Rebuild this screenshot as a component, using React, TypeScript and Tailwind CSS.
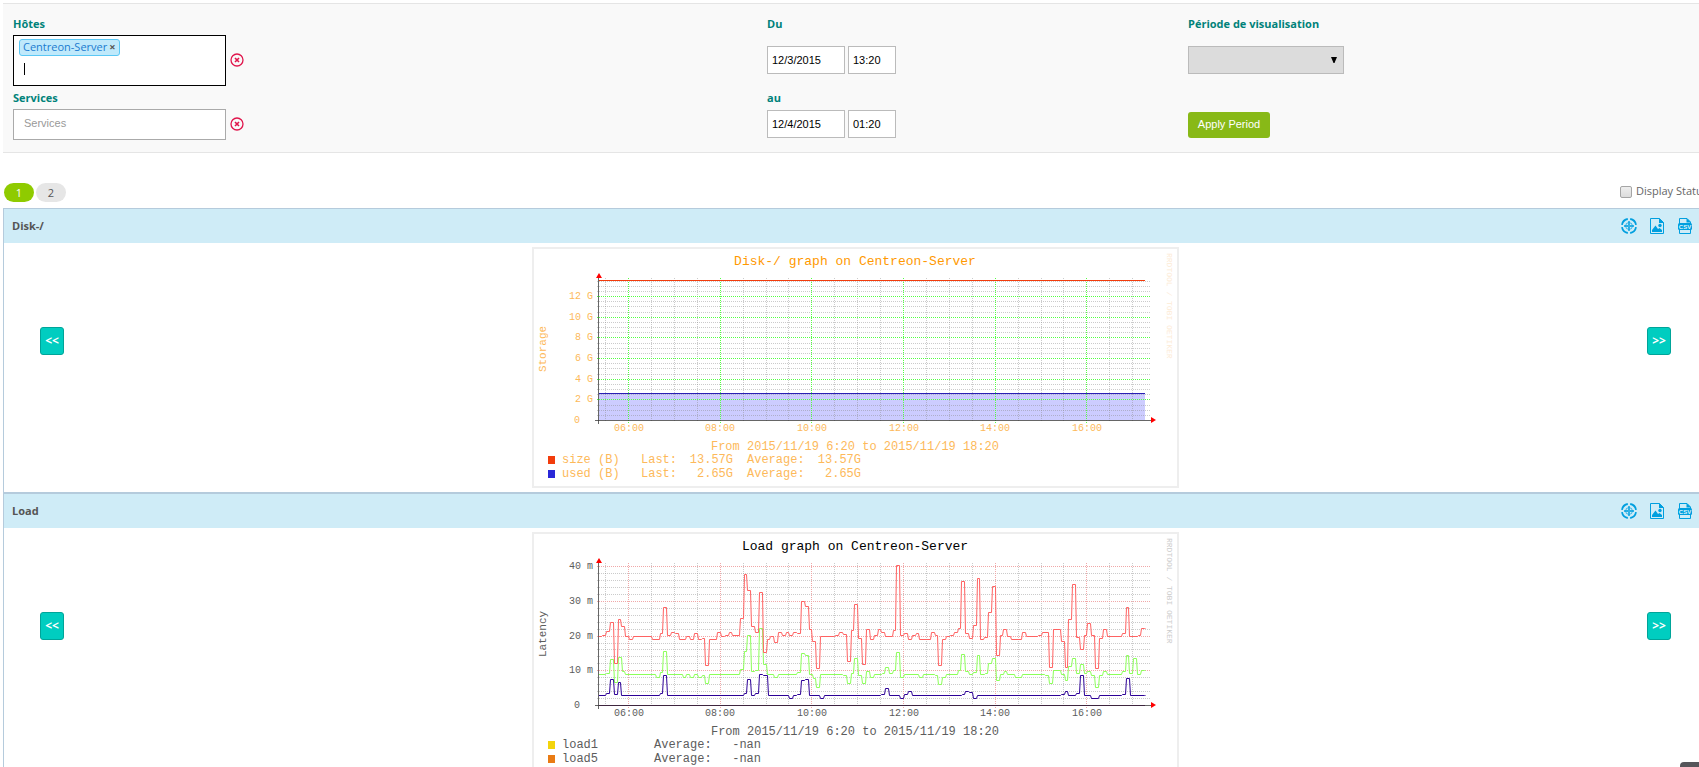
import { useState, type ReactNode } from 'react';

type Step = [number, number];

const RED: Step[] = [[222,334],[231,331],[243,319],[255,292],[267,415],[279,283],[289,304],[301,334],[313,343],[324,334],[382,343],[405,325],[415,247],[426,331],[438,322],[450,325],[462,343],[484,334],[496,343],[508,325],[519,343],[531,340],[541,421],[553,343],[577,322],[588,334],[600,331],[611,322],[622,331],[645,280],[657,148],[666,196],[678,304],[691,322],[703,202],[714,382],[727,343],[734,334],[747,352],[760,322],[771,331],[782,322],[792,331],[805,322],[817,325],[829,229],[840,244],[852,313],[862,349],[874,430],[886,334],[930,331],[943,322],[955,328],[966,409],[978,316],[988,238],[1000,340],[1012,418],[1023,313],[1035,343],[1047,331],[1058,313],[1069,322],[1081,334],[1104,316],[1114,121],[1125,331],[1137,325],[1149,343],[1161,331],[1172,325],[1183,343],[1218,322],[1230,331],[1240,421],[1251,343],[1263,334],[1275,331],[1287,322],[1300,310],[1309,169],[1321,325],[1332,340],[1344,301],[1356,160],[1366,343],[1378,337],[1390,262],[1401,184],[1413,391],[1425,331],[1435,313],[1447,334],[1459,343],[1492,322],[1504,334],[1540,331],[1552,322],[1572,427],[1584,313],[1607,349],[1619,427],[1630,283],[1641,178],[1653,337],[1665,373],[1676,331],[1687,295],[1699,331],[1711,430],[1723,340],[1734,313],[1745,334],[1791,325],[1803,247],[1812,334],[1839,331],[1849,310],[1860,310]];

const GREEN: Step[] = [[222,448],[243,445],[255,403],[268,472],[279,397],[290,439],[301,448],[393,457],[405,442],[415,379],[427,448],[473,457],[484,448],[496,457],[508,448],[519,457],[531,451],[541,475],[553,448],[646,433],[657,378],[666,331],[678,439],[691,436],[703,310],[714,418],[727,448],[748,457],[760,448],[817,442],[828,385],[840,391],[852,448],[863,460],[874,487],[886,448],[955,451],[966,475],[978,445],[988,400],[998,451],[1011,475],[1023,439],[1035,457],[1047,448],[1070,445],[1081,427],[1092,445],[1104,436],[1114,382],[1126,457],[1138,448],[1183,457],[1195,448],[1230,451],[1240,478],[1252,457],[1264,448],[1299,436],[1309,388],[1321,439],[1332,448],[1344,442],[1356,391],[1366,448],[1379,445],[1390,415],[1402,400],[1414,466],[1425,448],[1436,439],[1447,448],[1470,457],[1492,448],[1560,451],[1572,475],[1584,436],[1607,448],[1619,466],[1630,424],[1641,400],[1653,445],[1665,418],[1676,445],[1687,439],[1699,451],[1711,487],[1723,451],[1734,439],[1745,448],[1791,439],[1803,391],[1813,445],[1825,400],[1837,448],[1849,436],[1860,436]];

const INDIGO: Step[] = [[222,511],[243,505],[255,463],[268,508],[279,472],[289,511],[405,505],[415,451],[427,511],[657,505],[667,463],[678,511],[691,505],[702,448],[714,451],[728,511],[793,520],[805,511],[817,508],[829,466],[840,463],[853,511],[885,520],[898,511],[1069,508],[1080,490],[1092,511],[1126,520],[1138,508],[1149,499],[1161,511],[1310,508],[1321,499],[1333,502],[1344,520],[1356,511],[1608,508],[1619,499],[1629,511],[1653,505],[1665,451],[1676,511],[1699,520],[1722,511],[1791,508],[1803,460],[1815,511],[1860,511]];

// Samples are stored on a grid three times finer than the plot.
const stepPath = (steps: Step[]) =>
  steps
    .map(([x, y], i) => {
      const px = Math.round(x / 3 - 7);
      const py = Math.floor(y / 3 - 7) + 0.5;
      return i === 0 ? `M${px} ${py}` : `L${px - 0.5} ${Math.floor(steps[i - 1][1] / 3 - 7) + 0.5}L${px + 0.5} ${py}`;
    })
    .join('');

const HOURS = ['06:00', '08:00', '10:00', '12:00', '14:00', '16:00'];
const MONO = "font-['Liberation_Mono',monospace]";

interface ChartProps {
  title: string;
  titleColor: string;
  textColor: string;
  creditColor: string;
  majorColor: string;
  unitLabel: string;
  yLabels: string[];
  majorStep: number;
  minorStep: number;
  minorCount: number;
  area?: ReactNode;
  lines: ReactNode;
  legend: ReactNode;
}

function Chart(p: ChartProps) {
  const verticals = Array.from({ length: 24 }, (_, i) => ({
    x: Math.floor(96.5 + (i - 1) * 22.92) + 0.5,
    major: (i - 1) % 4 === 0,
  }));
  return (
    <div className="border-2 border-[#eeeeee] bg-white">
      <svg width="643" height="237" viewBox="2 2 643 237" role="img" aria-label={p.title} className={`block ${MONO}`}>
        <text x="323" y="18" textAnchor="middle" fill={p.titleColor} className="text-[13px]">{p.title}</text>
        {p.area}
        <g shapeRendering="crispEdges" strokeWidth="1" strokeDasharray="1 1">
          {Array.from({ length: p.minorCount }, (_, i) => {
            const y = Math.floor(173.5 - (i + 1) * p.minorStep) + 0.5;
            return <line key={i} x1="65" x2="619" y1={y} y2={y} stroke="#8c8c8c" strokeOpacity="0.45" />;
          })}
          {verticals.filter((v) => !v.major && v.x < 619).map((v) => (
            <line key={v.x} x1={v.x} x2={v.x} y1="31" y2="175" stroke="#8c8c8c" strokeOpacity="0.45" />
          ))}
          {p.yLabels.slice(1).map((l, i) => {
            const y = Math.floor(173.5 - (i + 1) * p.majorStep) + 0.5;
            return <line key={l} x1="65" x2="619" y1={y} y2={y} stroke={p.majorColor} />;
          })}
          {verticals.filter((v) => v.major && v.x < 619).map((v) => (
            <line key={v.x} x1={v.x} x2={v.x} y1="31" y2="177" stroke={p.majorColor} />
          ))}
        </g>
        {p.lines}
        <g shapeRendering="crispEdges" stroke="#333333" strokeOpacity="0.75">
          <line x1="63" x2="619" y1="173.5" y2="173.5" />
          <line x1="66.5" x2="66.5" y1="31" y2="177" />
        </g>
        <path d="M67 26L70 31H64Z" fill="#ff0000" />
        <path d="M624 173L619 170V176Z" fill="#ff0000" />
        <g fill={p.textColor} className="text-[10px]">
          {p.yLabels.map((l, i) => (
            <text key={l} x={i === 0 ? 48 : 61} y={Math.floor(176.5 - i * p.majorStep)} textAnchor="end">{l}</text>
          ))}
          {HOURS.map((h, i) => (
            <text key={h} x={Math.floor(97 + i * 91.67)} y="184" textAnchor="middle">{h}</text>
          ))}
        </g>
        <text transform="translate(14 102) rotate(-90)" textAnchor="middle" fill={p.textColor} className="text-[11px]">{p.unitLabel}</text>
        <text transform="translate(635 6) rotate(90)" fill={p.creditColor} className="text-[8px]">RRDTOOL / TOBI OETIKER</text>
        <g fill={p.textColor} className="text-[12px]">
          <text x="323" y="203" textAnchor="middle">From 2015/11/19 6:20 to 2015/11/19 18:20</text>
          {p.legend}
        </g>
      </svg>
    </div>
  );
}

function DiskChart() {
  const rows = [
    { name: 'size', color: '#f23c0c', value: '13.57G', y: 216 },
    { name: 'used', color: '#2a28d8', value: '2.65G', y: 230 },
  ];
  return (
    <Chart
      title="Disk-/ graph on Centreon-Server"
      titleColor="#ff9900"
      textColor="#fdb95a"
      creditColor="#fdebd6"
      majorColor="#55ff44"
      unitLabel="Storage"
      yLabels={['0', '2 G', '4 G', '6 G', '8 G', '10 G', '12 G']}
      majorStep={20.65}
      minorStep={5.16}
      minorCount={27}
      area={<rect x="67" y="147" width="546" height="26" fill="#ccccff" />}
      lines={
        <g shapeRendering="crispEdges">
          <line x1="67" x2="613" y1="33.5" y2="33.5" stroke="#f23c0c" />
          <line x1="67" x2="613" y1="146.5" y2="146.5" stroke="#2a1fb4" />
        </g>
      }
      legend={rows.map((r) => (
        <g key={r.name}>
          <rect x="16" y={r.y - 7} width="7" height="8" fill={r.color} />
          <text x="30" y={r.y}>{r.name}</text>
          <text x="66" y={r.y}>(B)</text>
          <text x="109" y={r.y}>Last:</text>
          <text x="201" y={r.y} textAnchor="end">{r.value}</text>
          <text x="215" y={r.y}>Average:</text>
          <text x="329" y={r.y} textAnchor="end">{r.value}</text>
        </g>
      ))}
    />
  );
}

function LoadChart() {
  const rows = [
    { name: 'load1', color: '#f3d40c', y: 216 },
    { name: 'load5', color: '#e97b14', y: 230 },
  ];
  return (
    <Chart
      title="Load graph on Centreon-Server"
      titleColor="#000000"
      textColor="#5c5c5c"
      creditColor="#cccccc"
      majorColor="#f0a8a8"
      unitLabel="Latency"
      yLabels={['0', '10 m', '20 m', '30 m', '40 m']}
      majorStep={34.7}
      minorStep={6.94}
      minorCount={20}
      lines={
        <g fill="none" strokeWidth="1">
          <path d={stepPath(GREEN)} stroke="#8cff5a" />
          <path d={stepPath(RED)} stroke="#ff6262" />
          <path d={stepPath(INDIGO)} stroke="#2c0096" />
          <path d="M67 173.5H613" stroke="#660066" />
        </g>
      }
      legend={rows.map((r) => (
        <g key={r.name}>
          <rect x="16" y={r.y - 7} width="7" height="8" fill={r.color} />
          <text x="30" y={r.y}>{r.name}</text>
          <text x="122" y={r.y}>Average:</text>
          <text x="229" y={r.y} textAnchor="end">-nan</text>
        </g>
      ))}
    />
  );
}

function ClearButton({ label }: { label: string }) {
  return (
    <button type="button" aria-label={label} className="ml-1 pb-[2px]">
      <svg width="14" height="14" viewBox="0 0 14 14" fill="none" stroke="#e0164c" className="block">
        <circle cx="7" cy="7" r="6" strokeWidth="1.3" />
        <path d="M5 5L9 9M9 5L5 9" strokeWidth="1.6" />
      </svg>
    </button>
  );
}

function TargetIcon() {
  return (
    <svg width="16" height="16" viewBox="0 0 16 16" fill="none" stroke="#009fdf" className="block">
      <path d="M1 6.8A7.1 7.1 0 0 1 6.8 1M9.2 1A7.1 7.1 0 0 1 15 6.8M15 9.2A7.1 7.1 0 0 1 9.2 15M6.8 15A7.1 7.1 0 0 1 1 9.2" strokeWidth="1.8" />
      <path d="M8 3V7M8 9V13M3 8H7M9 8H13" strokeWidth="1.4" />
      <path d="M8 6.5V9.5M6.5 8H9.5" strokeWidth="1" />
      <circle cx="8" cy="8" r="3.4" strokeWidth="0.7" />
    </svg>
  );
}

function PictureIcon() {
  return (
    <svg width="14" height="16" viewBox="0 0 14 16" className="block">
      <path d="M.5 .5H9.5L13.5 4.5V15.5H.5Z" fill="none" stroke="#009fdf" />
      <path d="M9 0L14 5H9Z" fill="#009fdf" />
      <path d="M2 14V12L5.5 7.5L8 11L9.5 10L12 12V14Z" fill="#009fdf" />
      <circle cx="10" cy="7.5" r="1.7" fill="#009fdf" />
    </svg>
  );
}

function CsvIcon() {
  return (
    <svg width="14" height="16" viewBox="0 0 14 16" className="block">
      <path d="M1.5 .5H9L12.5 4V15.5H1.5Z" fill="none" stroke="#009fdf" />
      <path d="M8.5 0L13 4.5H8.5Z" fill="#009fdf" />
      <rect x="0" y="5" width="14" height="7" rx="1.5" fill="#009fdf" />
      <text x="7" y="11" textAnchor="middle" fill="#dff4fb" className="font-['Liberation_Sans',sans-serif] text-[6px] font-bold">CSV</text>
    </svg>
  );
}

function NavButton({ children, label }: { children: ReactNode; label: string }) {
  return (
    <button
      type="button"
      aria-label={label}
      className="flex h-7 w-6 items-center justify-center rounded-[3px] border border-[#00a499] bg-[#00cdc0] text-[12px] font-bold text-white"
    >
      {children}
    </button>
  );
}

function GraphPanel({ name, children }: { name: string; children: ReactNode }) {
  return (
    <section className="border border-[#b5cbdc]">
      <header className="flex h-[34px] items-center justify-between bg-[#cfecf7] pr-[15px] pl-2">
        <h2 className="text-[11px] font-bold text-[#555555]">{name}</h2>
        <div className="flex items-center">
          <button type="button" aria-label="Split chart" className="mr-[13px]"><TargetIcon /></button>
          <button type="button" aria-label="Export image" className="mr-[14px]"><PictureIcon /></button>
          <button type="button" aria-label="Export CSV"><CsvIcon /></button>
        </div>
      </header>
      <div className="flex justify-between px-9 py-1">
        <div className="pt-20"><NavButton label="Previous period">&lt;&lt;</NavButton></div>
        {children}
        <div className="pt-20"><NavButton label="Next period">&gt;&gt;</NavButton></div>
      </div>
    </section>
  );
}

const LABEL = 'block h-[18px] text-[11px] leading-[18px] font-bold text-[#00827a]';
const FIELD = "h-7 border border-[#bbbbbb] bg-white px-1 font-['Liberation_Sans',sans-serif] text-[11px] text-black outline-none";

export default function App() {
  const [status, setStatus] = useState(false);
  return (
    <div className="overflow-x-clip bg-white pt-[3px] pl-[3px] font-['Open_Sans',sans-serif]">
      <div className="-mr-[9px]">
        <form className="grid grid-cols-[754fr_421fr_530fr] gap-y-[3px] border-y border-[#e5e5e5] bg-[#f9f9f9] pt-[11px] pb-3">
          <div className="pl-[10px]">
            <label htmlFor="hosts" className={LABEL}>Hôtes</label>
            <div className="mt-[2px] flex items-center">
              <div className="h-[51px] w-[213px] border border-black bg-white px-[5px] pt-[3px]">
                <div className="flex">
                  <span className="flex h-[17px] items-center rounded-[3px] border border-[#5bc8f5] bg-[#bfe9fb] px-[3px] text-[11px] text-[#1a7bd0]">
                    Centreon-Server
                    <button type="button" aria-label="Remove Centreon-Server" className="ml-[2px] text-[11px] font-bold text-[#555555]">×</button>
                  </span>
                </div>
                <div className="mt-[7px] flex h-3 pl-[5px]">
                  <span className="w-px bg-black" />
                  <input id="hosts" type="text" className="w-40 bg-transparent text-[11px] caret-transparent outline-none" />
                </div>
              </div>
              <ClearButton label="Clear hosts" />
            </div>
          </div>
          <div className="pl-[10px]">
            <label htmlFor="from-date" className={LABEL}>Du</label>
            <div className="mt-[2px] flex h-[50px] items-center gap-[3px]">
              <input id="from-date" type="text" defaultValue="12/3/2015" className={`${FIELD} w-[78px]`} />
              <input aria-label="Du, heure" type="text" defaultValue="13:20" className={`${FIELD} w-12`} />
            </div>
          </div>
          <div className="pl-[10px]">
            <label htmlFor="period" className={LABEL}>Période de visualisation</label>
            <div className="mt-[2px] flex h-[50px] items-center">
              <div className="grid w-[156px] items-center">
                <select id="period" className="col-start-1 row-start-1 h-7 w-full appearance-none border border-[#bbbbbb] bg-[#dcdcdc] text-[11px]">
                  <option value=""></option>
                </select>
                <svg width="6" height="6" viewBox="0 0 6 6" className="pointer-events-none col-start-1 row-start-1 mr-[7px] justify-self-end">
                  <path d="M0 0H6L3.5 6H2.5Z" fill="#000000" />
                </svg>
              </div>
            </div>
          </div>
          <div className="pl-[10px]">
            <label htmlFor="services" className={LABEL}>Services</label>
            <div className="mt-[2px] flex items-center">
              <input
                id="services"
                type="text"
                placeholder="Services"
                className="h-[31px] w-[213px] border border-[#aaaaaa] bg-white px-[10px] pb-1 font-['Liberation_Sans',sans-serif] text-[11px] outline-none placeholder:text-[#999999]"
              />
              <ClearButton label="Clear services" />
            </div>
          </div>
          <div className="pl-[10px]">
            <label htmlFor="to-date" className={LABEL}>au</label>
            <div className="mt-[2px] flex h-[30px] items-center gap-[3px]">
              <input id="to-date" type="text" defaultValue="12/4/2015" className={`${FIELD} w-[78px]`} />
              <input aria-label="au, heure" type="text" defaultValue="01:20" className={`${FIELD} w-12`} />
            </div>
          </div>
          <div className="flex items-end pl-[10px]">
            <div className="flex h-[31px] items-center">
              <button type="button" className="h-[26px] w-[82px] rounded-[3px] bg-[#88b917] font-['Liberation_Sans',sans-serif] text-[11px] whitespace-nowrap text-white">
                Apply Period
              </button>
            </div>
          </div>
        </form>

        <div className="mt-[30px] mb-[6px] flex h-[19px] justify-between">
          <nav aria-label="Pages" className="flex gap-[2px] pl-px text-[11px] leading-[19px]">
            <a href="#page-1" aria-current="page" className="w-[30px] rounded-full bg-[#8fcb00] text-center text-white">1</a>
            <a href="#page-2" className="w-[30px] rounded-full bg-[#e6e6e6] text-center text-[#555555]">2</a>
          </nav>
          <label className="flex h-4 w-[88px] items-center gap-1 text-[11px] whitespace-nowrap text-[#666666]">
            <input
              type="checkbox"
              checked={status}
              onChange={(e) => setStatus(e.target.checked)}
              className="mt-[2px] size-3 shrink-0 appearance-none rounded-[2px] border border-[#a5a5a5] bg-linear-to-b from-[#eeeeee] to-[#dcdcdc] checked:bg-[#009fdf]"
            />
            Display Status
          </label>
        </div>

        <main>
          <GraphPanel name="Disk-/"><DiskChart /></GraphPanel>
          <GraphPanel name="Load"><LoadChart /></GraphPanel>
        </main>
      </div>
      <button type="button" aria-label="Back to top" className="fixed right-0 bottom-0 h-[5px] w-[19px] rounded-tl-[4px] bg-[#55565a]" />
    </div>
  );
}
